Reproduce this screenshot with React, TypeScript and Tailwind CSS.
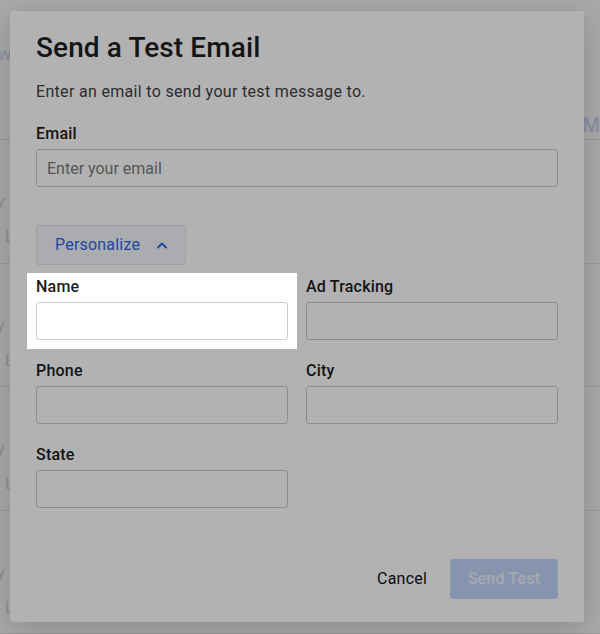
import React from "react";

const font = "font-['Roboto','Liberation_Sans',sans-serif]";

function Field({ label, highlight }: { label: string; highlight?: boolean }) {
  return (
    <div
      className={
        highlight
          ? "relative z-10 -mx-[9px] -mt-[2px] -mb-[9px] bg-white px-[9px] pt-[2px] pb-[9px] shadow-[0_0_0_2000px_rgba(0,0,0,0.3)]"
          : ""
      }
    >
      <label className="block text-[16px] leading-6 font-medium tracking-[0.2px] text-[#1c1c1c]">{label}</label>
      <input
        className="mt-[3px] block h-[38px] w-full rounded-[3px] border border-[#c9ccd9] bg-white px-[10px] text-[16px] outline-none"
      />
    </div>
  );
}

function PageRow({ title }: { title: string }) {
  return (
    <div className="h-[125px] border-b border-[#e6e6e6] pt-[52px]">
      <div className="-ml-[46px] h-5 text-[16px] leading-5 text-[#d6d6d6]">{title}</div>
      <div className="mt-[15px] flex h-5 items-center gap-2 pl-[5px] text-[16px] leading-5 text-[#d9d9d9]">
        <span>List ▾</span>
        <span>|</span>
        <span>Spam Score</span>
      </div>
    </div>
  );
}

export default function App() {
  return (
    <div className={`relative h-[634px] w-[600px] overflow-hidden bg-white ${font}`}>
      {/* page behind the dialog */}
      <div className="flex h-full flex-col">
        <div className="flex h-[143px] border-b border-[#e6e6e6]">
          <div className="w-[585px] pt-[40px]">
            <span className="-ml-[2px] text-[18px] text-[#d3d8f2]">w</span>
          </div>
          <div className="pt-[113px] text-[20px] font-medium leading-6 text-[#d3d8f2]">M</div>
        </div>
        <PageRow title="Weekly" />
        <PageRow title="Weekly" />
        <PageRow title="Weekly" />
        <PageRow title="Weekly" />
      </div>

      {/* dialog */}
      <div className="absolute inset-0 flex items-start bg-black/5 pt-[11px] pl-[10px]">
        <div className="flex h-[611px] w-[574px] flex-col rounded-[3px] bg-white px-[26px] pt-[20px] pb-[23px] shadow-[0_6px_30px_rgba(0,0,0,0.18)]">
          <h2 className="text-[28px] leading-[34px] font-medium tracking-[0.1px] text-[#1f1f1f]">Send a Test Email</h2>
          <p className="mt-[15px] text-[16px] leading-6 tracking-[0.32px] text-[#3f3f3f]">
            Enter an email to send your test message to.
          </p>

          <div className="mt-[18px]">
            <label className="block text-[16px] leading-6 font-medium tracking-[0.2px] text-[#1c1c1c]">Email</label>
            <input
              placeholder="Enter your email"
              className="mt-[3px] block h-[38px] w-full rounded-[3px] border border-[#c9ccd9] bg-white px-[10px] text-[16px] outline-none placeholder:text-[#7c7c7c]"
            />
          </div>

          <button
            type="button"
            className="mt-[38px] flex h-10 w-[150px] items-center gap-[17px] self-start rounded-[3px] border border-[#dfe2ec] bg-[#f4f6fb] pl-[18px] text-[16px] tracking-[0.2px] text-[#2f66e6]"
          >
            Personalize
            <svg width="10" height="7" viewBox="0 0 10 7" fill="none">
              <polyline points="1,5.5 5,1.5 9,5.5" stroke="currentColor" strokeWidth="2" strokeLinecap="round" strokeLinejoin="round" />
            </svg>
          </button>

          <div className="mt-[10px] grid grid-cols-2 gap-x-[18px] gap-y-[19px]">
            <Field label="Name" highlight />
            <Field label="Ad Tracking" />
            <Field label="Phone" />
            <Field label="City" />
            <Field label="State" />
          </div>

          <div className="mt-auto flex items-center justify-end gap-[23px]">
            <button type="button" className="text-[16px] tracking-[0.2px] text-[#111]">
              Cancel
            </button>
            <button
              type="button"
              disabled
              className="h-10 w-[108px] rounded-[3px] bg-[#c1d5fa] text-[16px] font-medium tracking-[0.2px] text-[#edf1fa]"
            >
              Send Test
            </button>
          </div>
        </div>
      </div>
    </div>
  );
}
